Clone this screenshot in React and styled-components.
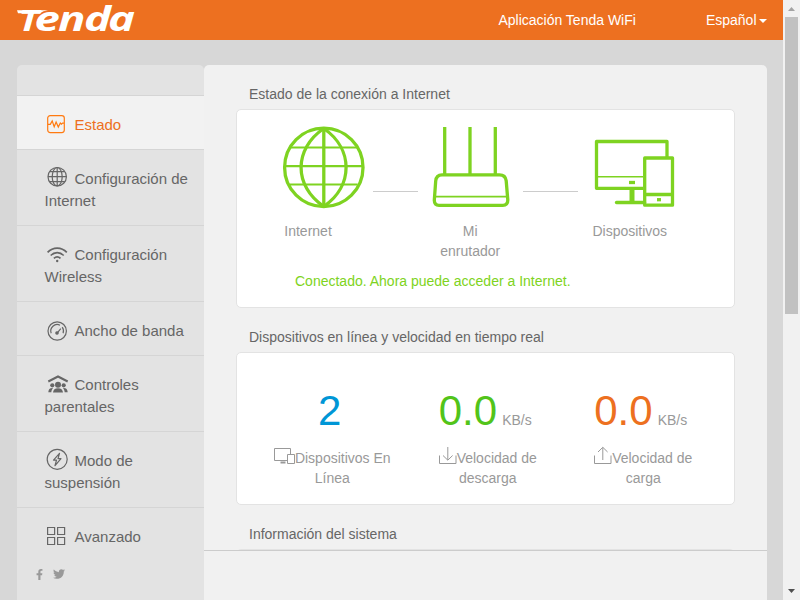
import React from "react";
import styled, { createGlobalStyle } from "styled-components";
import { FaFacebookF, FaTwitter } from "react-icons/fa";

const GlobalStyle = createGlobalStyle`
  * { box-sizing: border-box; }
  body {
    margin: 0;
    background: #d7d7d7;
    font-family: "Liberation Sans", Arial, sans-serif;
    font-size: 14px;
    line-height: 20px;
    color: #666;
  }
  svg { display: block; overflow: visible; }
`;

const Window = styled.div`
  display: flex;
  width: 800px;
  height: 600px;
  overflow: hidden;
`;
const Page = styled.div`
  width: 783px;
  display: flex;
  flex-direction: column;
`;
const Header = styled.header`
  height: 40px;
  flex: none;
  display: flex;
  align-items: center;
  background: #ed7020;
  color: #fff;
  padding: 0 16px 0 17px;
`;
const Logo = styled.svg`
  width: 118px;
  height: 40px;
  margin-right: auto;
  fill: #fff;
  font-family: "Open Sans", sans-serif;
  font-weight: 700;
  font-style: italic;
`;
const AppLink = styled.span`
  margin-right: 70px;
`;
const Language = styled.span`
  display: flex;
  align-items: center;
  gap: 2.5px;
`;
const Caret = styled.i`
  border: 4px solid transparent;
  border-top-color: #fff;
  border-bottom: 0;
  margin-top: 2px;
`;

const Body = styled.div`
  flex: 1;
  min-height: 0;
  display: flex;
  padding: 25px 16px 0 17px;
`;
const Sidebar = styled.nav`
  width: 187px;
  background: #e3e3e3;
  border-radius: 5px 5px 0 0;
  padding-top: 30px;
`;
const MenuItem = styled.div`
  padding: 18px 12px 13px 27.5px;
  border-top: 1px solid #d5d5d5;
  font-size: 15px;
  line-height: 22px;
  color: ${(p) => (p.$active ? "#ed7020" : "#666")};
  background: ${(p) => (p.$active ? "#f2f2f2" : "transparent")};
`;
const MenuIcon = styled.svg`
  && { display: inline-block; }
  width: 24px;
  height: 24px;
  margin: -8px 6px -8px 0;
  vertical-align: 1px;
  fill: none;
  stroke: ${(p) => (p.$active ? "#ff7a10" : "#666")};
  stroke-width: 1.2;
`;
const Social = styled.div`
  display: flex;
  align-items: center;
  gap: 8px;
  padding: 7px 0 0 17px;
  color: #999;
`;

const Main = styled.main`
  flex: 1;
  display: flex;
  flex-direction: column;
  background: #f1f1f1;
  border-radius: 5px 5px 0 0;
`;
const Content = styled.div`
  height: 485px;
  overflow: hidden;
  padding: 19px 32px 0;
`;
const Footer = styled.footer`
  flex: 1;
  border-top: 1px solid #ccc;
`;
const Title = styled.h2`
  margin: 0;
  padding-left: 13px;
  height: 25px;
  font-size: 14px;
  line-height: 20px;
  font-weight: 400;
`;
const Card = styled.section`
  height: ${(p) => p.$height}px;
  margin-bottom: 19px;
  background: #fff;
  border: 1px solid #e3e3e3;
  border-radius: 5px;
`;
const Network = styled.div`
  display: flex;
  align-items: flex-start;
  padding: 16px 0 0 46px;
  color: #999;
`;
const Node = styled.div`
  width: ${(p) => p.$width}px;
`;
const NodeIcon = styled.svg`
  width: 100%;
  height: 83px;
  fill: none;
  stroke: #7ed321;
  stroke-width: 3.3;
  stroke-linejoin: round;
`;
const NodeLabel = styled.div`
  margin: 12px 0 0 ${(p) => p.$shift || 0}px;
  width: ${(p) => p.$width || "auto"};
  text-align: ${(p) => p.$align || "left"};
`;
const Link = styled.div`
  width: ${(p) => p.$width}px;
  height: 1px;
  margin: 65px ${(p) => p.$after}px 0 ${(p) => p.$before}px;
  background: #ccc;
`;
const Status = styled.p`
  margin: 10px 0 0 58px;
  color: #7ed321;
`;
const Stats = styled.div`
  display: grid;
  grid-template-columns: repeat(3, 155.5px);
  padding: 37px 0 0 17.5px;
  text-align: center;
  color: #999;
`;
const Figure = styled.div`
  height: 58px;
  line-height: 42px;
  padding-right: 5px;
`;
const Value = styled.span`
  font-size: 42px;
  color: ${(p) => p.$color};
`;
const Unit = styled.span`
  margin-left: 5px;
`;
const Caption = styled.div`
  width: 120px;
  margin: 0 auto;
`;
const StatIcon = styled.svg`
  && { display: inline-block; }
  width: ${(p) => p.$width}px;
  height: 18px;
  margin: -4px 0;
  vertical-align: 2px;
  fill: none;
  stroke: #999;
  stroke-width: 1;
`;

const Scrollbar = styled.div`
  width: 17px;
  display: flex;
  flex-direction: column;
  align-items: center;
  justify-content: space-between;
  background: #f1f1f1;
`;
const Thumb = styled.div`
  width: 13px;
  height: 297px;
  margin-bottom: auto;
  background: #c1c1c1;
`;
const ScrollArrow = styled.svg`
  width: 17px;
  height: 17px;
  fill: ${(p) => p.$fill};
`;

const icons = {
  status: (
    <>
      <rect x="2.7" y="2.6" width="16.6" height="17" rx="2.5" />
      <path d="M3 11.4h2.3l1.9-3.5 2 5.8 1.9-4.7 2.2 5 2-4 1.2 1.2 1-1H19" />
    </>
  ),
  globe: (
    <>
      <circle cx="12.2" cy="9.7" r="9.2" />
      <ellipse cx="12.2" cy="9.7" rx="5" ry="9.2" />
      <path d="M12.2 .5v18.4M3 9.7h18.4M4.7 4.7h15M4.7 14.7h15" />
    </>
  ),
  wifi: (
    <>
      <path strokeWidth="1.7" d="M2.6 9.3C8 3.6 16.4 3.6 21.8 9.3M5.7 12.5c3.8-3.8 9.2-3.8 13 0M8.9 15.4c2-1.9 4.6-1.9 6.6 0" />
      <circle cx="12.2" cy="18" r="1.2" fill="#666" stroke="none" />
    </>
  ),
  gauge: (
    <>
      <circle cx="12.2" cy="12" r="9.2" />
      <path d="M6.2 14.2A6.4 6.4 0 0 1 15 6.2M17.2 8.2a6.4 6.4 0 0 1 .9 6M12.3 13.8l3.5-4.2" />
      <circle cx="12" cy="14" r="1.2" fill="#666" />
    </>
  ),
  family: (
    <g fill="#666">
      <path fill="none" strokeWidth="2" d="M3.3 8.5l9.7-5 9.7 5" />
      <g stroke="none">
        <circle cx="13" cy="11.7" r="3" />
        <circle cx="7.3" cy="12.3" r="2.1" />
        <circle cx="18.7" cy="12.3" r="2.1" />
        <path d="M8 19.6c.3-2.8 2-4.3 5-4.3s4.7 1.5 5 4.3zM3.3 19.3c.2-3 1.5-4.5 4.7-4.3-1 1.2-1.5 2.5-1.7 4.3zM22.7 19.3c-.2-3-1.5-4.5-4.7-4.3 1 1.2 1.5 2.5 1.7 4.3z" />
      </g>
    </g>
  ),
  power: (
    <>
      <circle cx="12.2" cy="10.3" r="10" />
      <path d="M14.5 4.3l-6 6.8h3l-1.5 5.5 6-7h-3z" strokeLinejoin="round" />
    </>
  ),
  grid: (
    <path d="M2.6 2.5h7v7H2.6zM12.6 2.5h7v7h-7zM2.6 12.5h7v7H2.6zM12.6 12.5h7v7h-7z" />
  ),
};

const menu = [
  ["status", "Estado"],
  ["globe", "Configuración de Internet"],
  ["wifi", "Configuración Wireless"],
  ["gauge", "Ancho de banda"],
  ["family", "Controles parentales"],
  ["power", "Modo de suspensión"],
  ["grid", "Avanzado"],
];

export default function App() {
  return (
    <Window>
      <GlobalStyle />
      <Page>
        <Header>
          <Logo viewBox="0 0 118 40" aria-label="Tenda">
            <path d="M0 10.3h31q-5 .6-8 3H1z" />
            <text transform="scale(1.32 1)" y="31" fontSize="34.5">
              <tspan x="1.2" fontSize="29">T</tspan>
              <tspan x="13.2">e</tspan>
              <tspan x="31">n</tspan>
              <tspan x="50.8">d</tspan>
              <tspan x="69">a</tspan>
            </text>
          </Logo>
          <AppLink>Aplicación Tenda WiFi</AppLink>
          <Language>Español<Caret /></Language>
        </Header>
        <Body>
          <Sidebar>
            {menu.map(([icon, label], i) => (
              <MenuItem key={icon} $active={i === 0}>
                <MenuIcon $active={i === 0} viewBox="0 0 24 24">{icons[icon]}</MenuIcon>
                {label}
              </MenuItem>
            ))}
            <Social>
              <FaFacebookF size={11} />
              <FaTwitter size={12} />
            </Social>
          </Sidebar>
          <Main>
            <Content>
              <Title>Estado de la conexión a Internet</Title>
              <Card $height={199}>
                <Network>
                  <Node $width={82}>
                    <NodeIcon viewBox="0 0 82 83">
                      <circle cx="40.8" cy="41.4" r="39.2" />
                      <path d="M40.8 2v78" />
                      <path d="M2 40.2h78" strokeWidth="2.3" />
                      <path d="M40.8 2.5C10.5 23 10.5 60 40.8 80.5M40.8 2.5C70.5 23 70.5 60 40.8 80.5" />
                      <path d="M7 21.5h67.5M7 58.5h67.5" strokeWidth="2" />
                    </NodeIcon>
                    <NodeLabel $shift={1.3}>Internet</NodeLabel>
                  </Node>
                  <Link $width={45} $before={8} $after={14} />
                  <Node $width={78}>
                    <NodeIcon viewBox="0 0 78 83">
                      <path d="M12.7 1v47M38 1v47M63.3 1v47" />
                      <path d="M3 70.7h73" strokeWidth="1.7" />
                      <path d="M10 48.8h57.5q6 0 6.7 6L75.8 74q0 5.3-5 5.3H7q-4.7 0-4.7-5L3.7 55q.5-6.2 6.3-6.2z" />
                    </NodeIcon>
                    <NodeLabel $width="76.4px" $align="center">Mi enrutador</NodeLabel>
                  </Node>
                  <Link $width={55} $before={13} $after={17} />
                  <Node $width={80}>
                    <NodeIcon viewBox="0 0 80 83">
                      <path d="M48 62.3H1.5V15.5H72V31" />
                      <path d="M1.5 50.7H48" strokeWidth="1.6" />
                      <path d="M37 63v12.5" strokeWidth="5" />
                      <path d="M21.5 76.5h28" strokeLinecap="round" />
                      <path d="M34 56.5h6" />
                      <path d="M49.7 32h27.8v47.2H49.7zM50 68.5h27.5" />
                      <path d="M62 73.7h4" />
                    </NodeIcon>
                    <NodeLabel $shift={-2.6}>Dispositivos</NodeLabel>
                  </Node>
                </Network>
                <Status>Conectado. Ahora puede acceder a Internet.</Status>
              </Card>
              <Title>Dispositivos en línea y velocidad en tiempo real</Title>
              <Card $height={153}>
                <Stats>
                  <div>
                    <Figure><Value $color="#0096d6">2</Value></Figure>
                    <Caption>
                      <StatIcon $width={21} viewBox="0 0 21 18">
                        <path d="M13.5 13.5H.5v-12h16V7M13.5 7.5h7v9h-7z" />
                        <path d="M6.5 15.5h5" strokeWidth="2" />
                      </StatIcon>Dispositivos En Línea
                    </Caption>
                  </div>
                  <div>
                    <Figure><Value $color="#52c41a">0.0</Value><Unit>KB/s</Unit></Figure>
                    <Caption>
                      <StatIcon $width={18} viewBox="0 0 18 18">
                        <path d="M.5 8.5v8h16.5v-8M8.8 0v13M4 8.5l4.8 4.7 4.8-4.7" />
                      </StatIcon>Velocidad de descarga
                    </Caption>
                  </div>
                  <div>
                    <Figure><Value $color="#ed7020">0.0</Value><Unit>KB/s</Unit></Figure>
                    <Caption>
                      <StatIcon $width={18} viewBox="0 0 18 18">
                        <path d="M.5 8.5v8h16.5v-8M8.8 13V.5M4 5l4.8-4.7L13.6 5" />
                      </StatIcon>Velocidad de carga
                    </Caption>
                  </div>
                </Stats>
              </Card>
              <Title>Información del sistema</Title>
              <Card $height={200} />
            </Content>
            <Footer />
          </Main>
        </Body>
      </Page>
      <Scrollbar>
        <ScrollArrow $fill="#a3a3a3" viewBox="0 0 17 17"><path d="M5 11h7L8.5 7z" /></ScrollArrow>
        <Thumb />
        <ScrollArrow $fill="#505050" viewBox="0 0 17 17"><path d="M5 6h7l-3.5 4z" /></ScrollArrow>
      </Scrollbar>
    </Window>
  );
}
